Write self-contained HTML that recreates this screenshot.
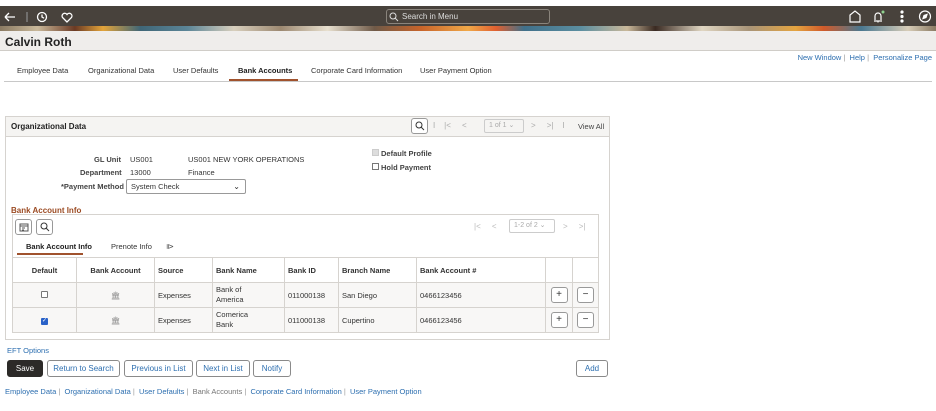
<!DOCTYPE html>
<html><head><style>
*{box-sizing:border-box;margin:0;padding:0}
body{width:936px;height:411px;position:relative;background:#fff;font-family:"Liberation Sans",sans-serif;font-size:8px;color:#333;overflow:hidden}
.a{position:absolute;white-space:nowrap}
.top{left:0;top:6px;width:936px;height:20px;background:#48423c}
.ban{left:0;top:26px;width:936px;height:5px;background:linear-gradient(90deg,#8a7a62 0,#c9b89a 4%,#6b3a24 8%,#e3a43a 11%,#3f6677 15%,#5b8597 20%,#d8cfbd 25%,#9c8870 30%,#e8e0cf 35%,#6f5a48 40%,#c8642a 45%,#f0a848 50%,#e06030 53%,#40708a 56%,#5b8ea0 62%,#c9b89a 67%,#3a2a22 70%,#e0d6c2 75%,#a89478 80%,#e4a440 85%,#d05a2a 88%,#4a7890 92%,#d8cdb8 97%,#8a7a62 100%)}
.title{left:0;top:31px;width:936px;height:20px;background:#efedeb;border-bottom:1px solid #d0cdc8}
.link{color:#2d6fb0}
.btn{position:absolute;top:360px;height:17px;border:1px solid #8a8a8a;border-radius:3px;background:#fff;color:#2d6fb0;font-size:8px;text-align:center;line-height:15px}
table{border-collapse:collapse;position:absolute;left:12px;top:257px;width:587px}
td,th{border:1px solid #d6d3cf;font-size:7.5px;text-align:left;padding:0 3px;height:25px}
th{font-weight:bold;color:#333;background:#fff}
tr.r td{background:#f8f7f6}
.sq{display:inline-block;width:17px;height:16px;border:1px solid #999;border-radius:3px;background:#fff;text-align:center;line-height:13px;font-size:10px}
</style></head><body>
<div class="a top"></div>
<svg class="a" style="left:3px;top:10px" width="70" height="14" viewBox="0 0 70 14" fill="none" stroke="#fff" stroke-width="1.3"><path d="M2 7H12M2 7l4-4M2 7l4 4"/><path d="M24 2v10" stroke="#888"/><circle cx="39" cy="7" r="4.5"/><path d="M39 4.5V7l2 1.2"/><path d="M64 12l-4.5-4.5a2.6 2.6 0 0 1 4.5-3a2.6 2.6 0 0 1 4.5 3z"/></svg>
<div class="a" style="left:386px;top:9px;width:164px;height:15px;border:1px solid #8a847c;border-radius:3px;color:#ddd;font-size:8px;line-height:13px;padding-left:15px">Search in Menu</div>
<svg class="a" style="left:389px;top:12px" width="10" height="10" fill="none" stroke="#ddd" stroke-width="1"><circle cx="4" cy="4" r="3"/><path d="M6 6l3 3"/></svg>
<svg class="a" style="left:845px;top:9px" width="90" height="15" viewBox="0 0 90 15" fill="none" stroke="#fff" stroke-width="1.2"><path d="M5 13V6l5-4 5 4v7z"/><path d="M29 12h8M30 11V7a3 3 0 0 1 6 0v4M33 12.5v1"/><circle cx="38" cy="3" r="1.5" fill="#8fd18f" stroke="none"/><circle cx="57" cy="3" r="1" fill="#fff"/><circle cx="57" cy="7.5" r="1" fill="#fff"/><circle cx="57" cy="12" r="1" fill="#fff"/><circle cx="80" cy="7.5" r="5.5"/><path d="M82 5.5l-3 1-1 3 3-1z" fill="#fff"/></svg>
<div class="a ban"></div>
<div class="a title"></div>
<div class="a" style="left:5px;top:35px;font-size:12px;font-weight:bold;color:#222">Calvin Roth</div>
<div class="a" style="right:4px;top:53px;font-size:7.5px"><span class="link">New Window</span> <span style="color:#999">|</span> &nbsp;<span class="link">Help</span> <span style="color:#999">|</span> &nbsp;<span class="link">Personalize Page</span></div>
<div class="a" style="left:17px;top:66px;font-size:7.5px">Employee Data</div>
<div class="a" style="left:88px;top:66px;font-size:7.5px">Organizational Data</div>
<div class="a" style="left:173px;top:66px;font-size:7.5px">User Defaults</div>
<div class="a" style="left:238px;top:66px;font-size:7.5px;font-weight:bold;color:#222">Bank Accounts</div>
<div class="a" style="left:311px;top:66px;font-size:7.5px">Corporate Card Information</div>
<div class="a" style="left:420px;top:66px;font-size:7.5px">User Payment Option</div>
<div class="a" style="left:4px;top:81px;width:928px;height:1px;background:#c8c8c8"></div>
<div class="a" style="left:229px;top:79px;width:69px;height:2px;background:#a0522d"></div>

<div class="a" style="left:5px;top:116px;width:605px;height:224px;border:1px solid #d6d3cf"></div>
<div class="a" style="left:6px;top:117px;width:603px;height:20px;background:#f5f4f2;border-bottom:1px solid #d6d3cf"></div>
<div class="a" style="left:11px;top:122px;font-weight:bold;font-size:8px;color:#222">Organizational Data</div>
<div class="a sq" style="left:411px;top:118px"></div>
<svg class="a" style="left:415px;top:121px" width="10" height="10" fill="none" stroke="#333"><circle cx="4" cy="4" r="3"/><path d="M6 6l3 3"/></svg>
<div class="a" style="left:433px;top:121px;color:#aaa;font-size:8px">I &nbsp;&nbsp; |&lt; &nbsp;&nbsp;&nbsp; &lt;</div>
<div class="a" style="left:484px;top:119px;width:40px;height:14px;border:1px solid #ccc;border-radius:2px;color:#aaa;font-size:7px;line-height:12px;padding-left:4px">1 of 1 ⌄</div>
<div class="a" style="left:531px;top:121px;color:#aaa;font-size:8px">&gt; &nbsp;&nbsp;&nbsp; &gt;| &nbsp;&nbsp; I</div>
<div class="a" style="left:578px;top:122px;font-size:7.5px;color:#444">View All</div>

<div class="a" style="left:94px;top:155px;font-size:7.5px;font-weight:bold;color:#444">GL Unit</div>
<div class="a" style="left:130px;top:155px;font-size:7.5px">US001</div>
<div class="a" style="left:188px;top:155px;font-size:7.5px">US001 NEW YORK OPERATIONS</div>
<div class="a" style="left:80px;top:168px;font-size:7.5px;font-weight:bold;color:#444">Department</div>
<div class="a" style="left:130px;top:168px;font-size:7.5px">13000</div>
<div class="a" style="left:188px;top:168px;font-size:7.5px">Finance</div>
<div class="a" style="left:61px;top:182px;font-size:7.5px;font-weight:bold;color:#444">*Payment Method</div>
<div class="a" style="left:126px;top:179px;width:120px;height:15px;border:1px solid #999;border-radius:2px;font-size:7.5px;line-height:13px;padding-left:4px">System Check<span style="position:absolute;right:5px;font-size:8px">⌄</span></div>
<div class="a" style="left:372px;top:149px;width:7px;height:7px;background:#ddd;border:1px solid #ccc"></div>
<div class="a" style="left:381px;top:149px;font-size:7.5px;font-weight:bold;color:#444">Default Profile</div>
<div class="a" style="left:372px;top:163px;width:7px;height:7px;border:1px solid #777"></div>
<div class="a" style="left:381px;top:163px;font-size:7.5px;font-weight:bold;color:#444">Hold Payment</div>

<div class="a" style="left:11px;top:206px;font-size:8px;font-weight:bold;color:#9b4a22">Bank Account Info</div>
<div class="a" style="left:12px;top:214px;width:587px;height:118px;border:1px solid #d6d3cf"></div>
<div class="a sq" style="left:15px;top:219px"></div>
<div class="a sq" style="left:36px;top:219px"></div>
<svg class="a" style="left:19px;top:223px" width="10" height="9" fill="none" stroke="#555"><path d="M1 1h8v7H1zM1 3h8M3 5h3M3 7h2"/></svg>
<svg class="a" style="left:40px;top:222px" width="10" height="10" fill="none" stroke="#333"><circle cx="4" cy="4" r="3"/><path d="M6 6l3 3"/></svg>
<div class="a" style="left:474px;top:222px;color:#bbb;font-size:8px">|&lt; &nbsp;&nbsp;&nbsp; &lt;</div>
<div class="a" style="left:509px;top:219px;width:46px;height:14px;border:1px solid #ccc;border-radius:2px;color:#aaa;font-size:7px;line-height:12px;padding-left:4px">1-2 of 2 ⌄</div>
<div class="a" style="left:563px;top:222px;color:#bbb;font-size:8px">&gt; &nbsp;&nbsp;&nbsp; &gt;|</div>
<div class="a" style="left:26px;top:242px;font-size:7.5px;font-weight:bold;color:#222">Bank Account Info</div>
<div class="a" style="left:17px;top:253px;width:66px;height:2px;background:#a0522d"></div>
<div class="a" style="left:111px;top:242px;font-size:7.5px">Prenote Info</div>
<div class="a" style="left:166px;top:242px;font-size:8px;color:#555">⧐</div>
<table>
<tr><th style="width:64px;text-align:center">Default</th><th style="width:78px;text-align:center">Bank Account</th><th style="width:58px">Source</th><th style="width:72px">Bank Name</th><th style="width:54px">Bank ID</th><th style="width:78px">Branch Name</th><th style="width:129px">Bank Account #</th><th style="width:27px"></th><th></th></tr>
<tr class="r"><td style="text-align:center"><span style="display:inline-block;width:7px;height:7px;border:1px solid #777;border-radius:1px;background:#fff"></span></td><td style="text-align:center;color:#888">🏛</td><td>Expenses</td><td style="line-height:10px">Bank of<br>America</td><td>011000138</td><td>San Diego</td><td>0466123456</td><td style="text-align:center"><span class="sq">+</span></td><td style="text-align:center"><span class="sq">−</span></td></tr>
<tr class="r"><td style="text-align:center"><span style="display:inline-block;width:7px;height:7px;border-radius:1px;background:#2a62c8;color:#fff;font-size:6px;line-height:7px">✓</span></td><td style="text-align:center;color:#888">🏛</td><td>Expenses</td><td style="line-height:10px">Comerica<br>Bank</td><td>011000138</td><td>Cupertino</td><td>0466123456</td><td style="text-align:center"><span class="sq">+</span></td><td style="text-align:center"><span class="sq">−</span></td></tr>
</table>

<div class="a link" style="left:7px;top:346px;font-size:7.5px">EFT Options</div>
<div class="btn" style="left:7px;width:36px;background:#2c2a28;color:#fff;border-color:#2c2a28">Save</div>
<div class="btn" style="left:47px;width:73px">Return to Search</div>
<div class="btn" style="left:124px;width:69px">Previous in List</div>
<div class="btn" style="left:196px;width:54px">Next in List</div>
<div class="btn" style="left:253px;width:38px">Notify</div>
<div class="btn" style="left:576px;width:32px">Add</div>
<div class="a" style="left:5px;top:387px;font-size:7.5px;color:#999"><span class="link">Employee Data</span> | &nbsp;<span class="link">Organizational Data</span> | &nbsp;<span class="link">User Defaults</span> | &nbsp;<span style="color:#777">Bank Accounts</span> | &nbsp;<span class="link">Corporate Card Information</span> | &nbsp;<span class="link">User Payment Option</span></div>
</body></html>
